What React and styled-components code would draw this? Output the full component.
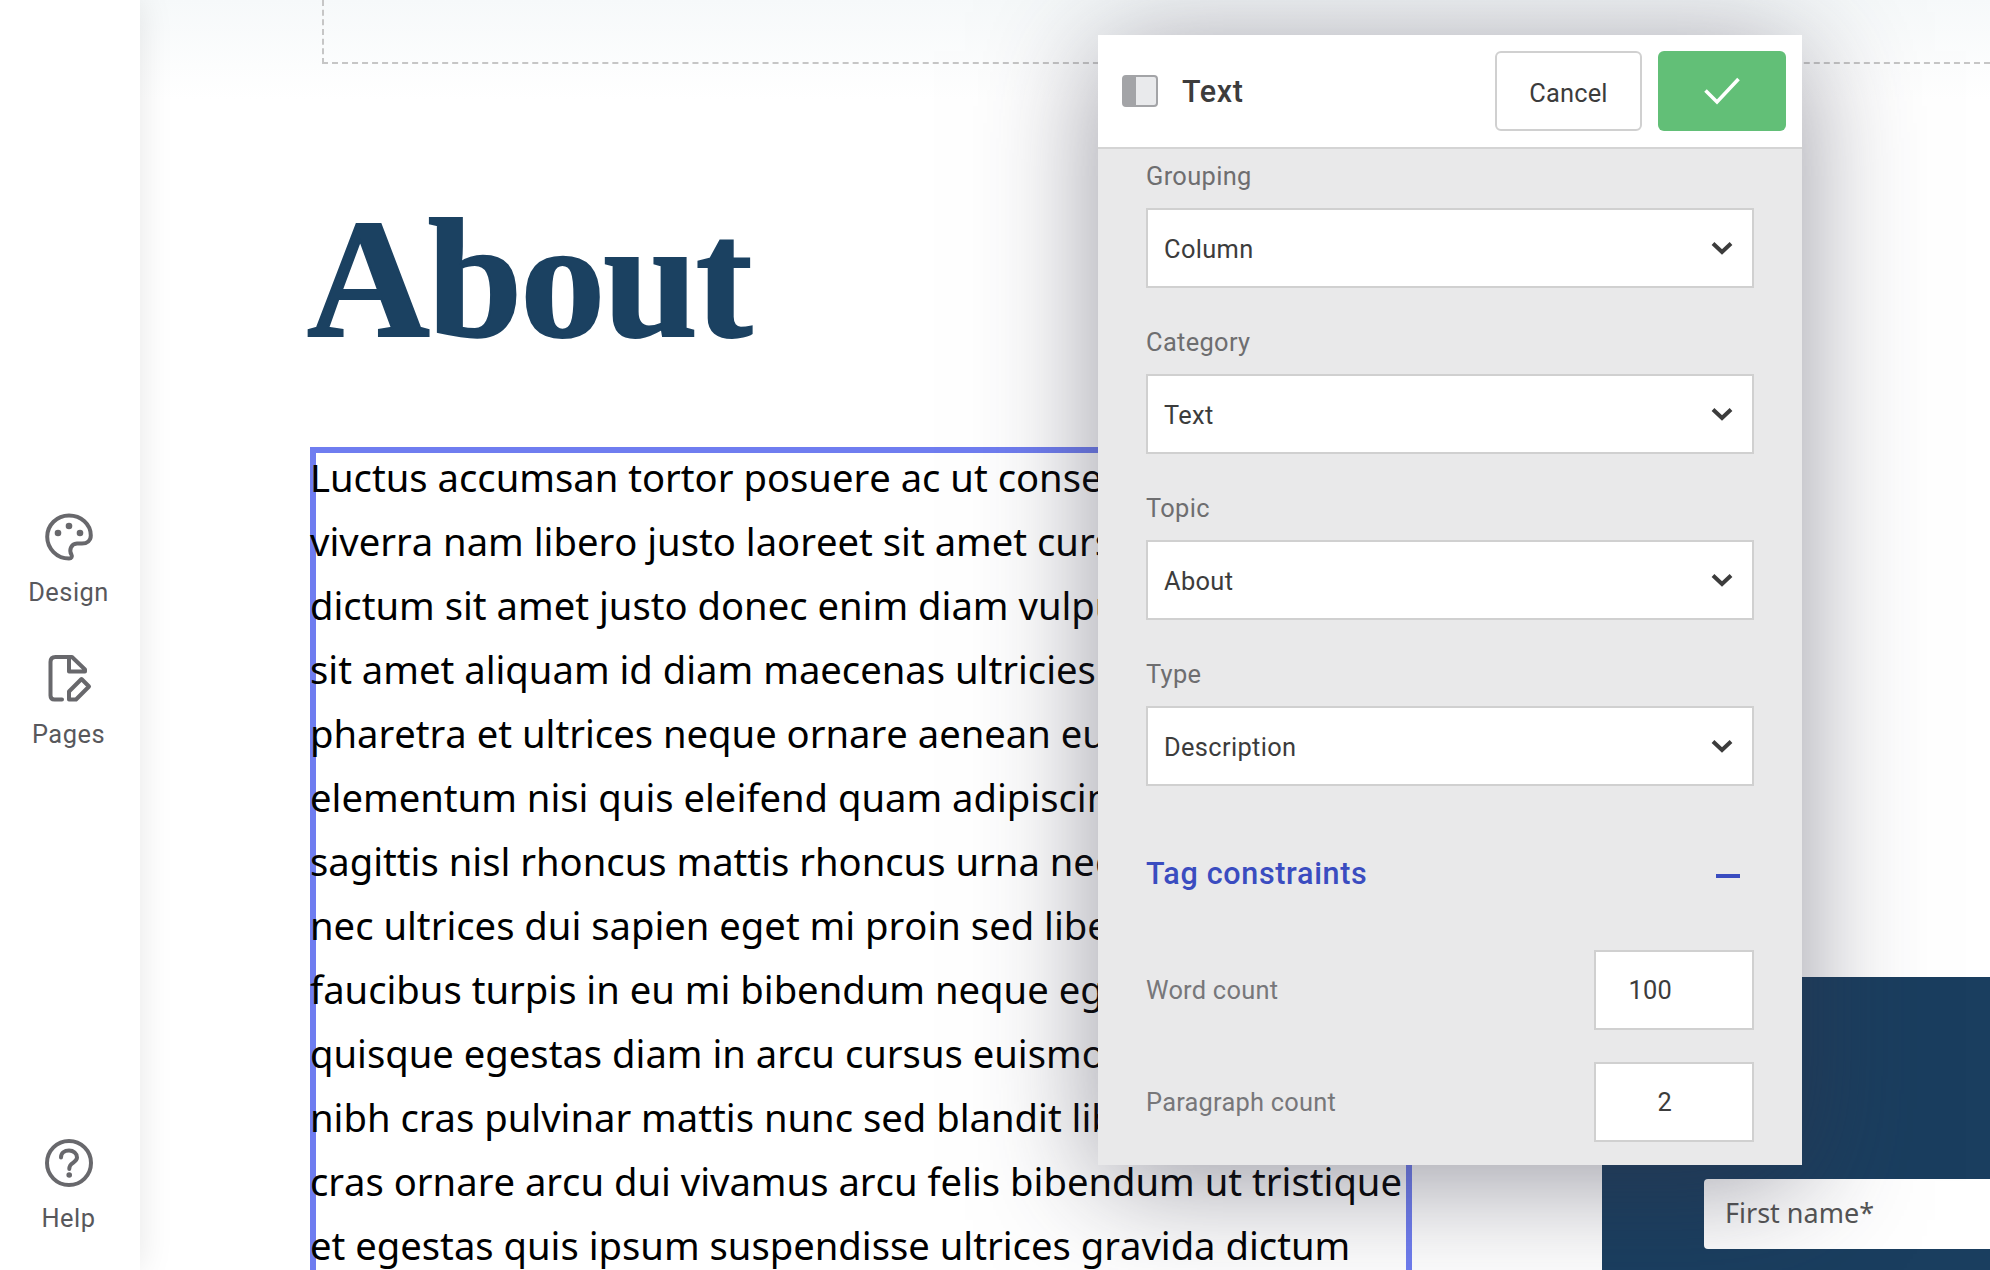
import React from 'react';
import styled, { createGlobalStyle } from 'styled-components';

const GlobalStyle = createGlobalStyle`
  html, body {
    margin: 0;
    padding: 0;
    height: 100%;
    overflow: hidden;
    background: #fff;
    font-family: 'Roboto', 'Liberation Sans', sans-serif;
  }
  * { box-sizing: border-box; }
`;

const bodyLines = [
  'Luctus accumsan tortor posuere ac ut consequat semper',
  'viverra nam libero justo laoreet sit amet cursus sit amet',
  'dictum sit amet justo donec enim diam vulputate ut',
  'sit amet aliquam id diam maecenas ultricies mi eget',
  'pharetra et ultrices neque ornare aenean euismod',
  'elementum nisi quis eleifend quam adipiscing vitae',
  'sagittis nisl rhoncus mattis rhoncus urna neque viverra',
  'nec ultrices dui sapien eget mi proin sed libero enim',
  'faucibus turpis in eu mi bibendum neque egestas congue',
  'quisque egestas diam in arcu cursus euismod quis',
  'nibh cras pulvinar mattis nunc sed blandit libero volutpat',
  'cras ornare arcu dui vivamus arcu felis bibendum ut tristique',
  'et egestas quis ipsum suspendisse ultrices gravida dictum',
];

const fields = [
  { label: 'Grouping', value: 'Column' },
  { label: 'Category', value: 'Text' },
  { label: 'Topic', value: 'About' },
  { label: 'Type', value: 'Description' },
];

const Page = styled.div`
  position: relative;
  display: flex;
  width: 100%;
  height: 100vh;
  overflow: hidden;
`;

/* Sidebar */
const Sidebar = styled.nav`
  position: relative;
  z-index: 1;
  flex: 0 0 140px;
  display: flex;
  flex-direction: column;
  gap: 48px;
  padding: 513px 3px 37px 0;
  background: #fff;
  box-shadow: 0 0 32px rgba(0, 0, 0, 0.1);
`;

const SideItem = styled.a`
  display: flex;
  flex-direction: column;
  align-items: center;
  gap: 16px;
  margin-top: ${(p) => (p.$bottom ? 'auto' : '0')};
  color: #58585c;
  font-size: 25.4px;
  letter-spacing: 0.5px;
  line-height: 30px;
`;

const SideIcon = styled.svg`
  display: block;
  width: 48px;
  height: 48px;
  fill: none;
  stroke: #68686c;
  stroke-width: 4px;
  stroke-linecap: round;
  stroke-linejoin: round;
`;

const Dot = styled.circle`
  fill: #68686c;
  stroke: none;
`;

/* Page canvas */
const Canvas = styled.main`
  flex: 1;
  min-width: 0;
  display: flex;
  flex-direction: column;
  overflow: hidden;
  background: linear-gradient(#f6f9fa, #fff 100px);
`;

const DashedBand = styled.div`
  flex: 0 0 64px;
  margin-left: 182px;
  border-left: 2px dashed #c6c6c6;
  border-bottom: 2px dashed #c6c6c6;
`;

const CanvasRow = styled.div`
  flex: 1;
  min-height: 0;
  display: flex;
`;

const ContentColumn = styled.section`
  flex: 0 0 1462px;
  padding-left: 170px;
`;

const Heading = styled.h1`
  margin: 130px 0 83px -3px;
  color: #1b4161;
  font-family: 'Liberation Serif', serif;
  font-size: 170px;
  font-weight: 700;
  line-height: 170px;
  letter-spacing: -2px;
  -webkit-text-stroke: 2px #1b4161;
`;

const SelectedText = styled.div`
  width: 1102px;
  box-shadow: inset 0 0 0 6px #6f7df0;
`;

const TextLine = styled.div`
  padding-bottom: 4px;
  color: #000;
  font-family: 'Noto Sans', sans-serif;
  font-size: 38.2px;
  font-kerning: none;
  line-height: 60px;
  white-space: nowrap;
`;

const SignupBlock = styled.aside`
  flex: 1;
  align-self: flex-end;
  height: 293px;
  padding: 202px 0 0 102px;
  overflow: hidden;
  background: #1a3e5f;
`;

const SignupInput = styled.div`
  width: 400px;
  height: 70px;
  padding-left: 21px;
  border-radius: 4px;
  background: #fff;
  color: #555;
  font-family: 'Noto Sans', sans-serif;
  font-size: 27px;
  line-height: 68px;
`;

/* Settings panel */
const Panel = styled.div`
  position: absolute;
  z-index: 2;
  top: 35px;
  left: 1098px;
  width: 704px;
  height: 1130px;
  background: #e9e9ea;
  box-shadow: 0 16px 110px rgba(50, 50, 70, 0.5);
`;

const PanelHeader = styled.header`
  display: flex;
  align-items: center;
  height: 114px;
  padding: 0 16px 0 24px;
  border-bottom: 2px solid #d4d4d4;
  background: #fff;
`;

const ToggleIcon = styled.span`
  flex: none;
  width: 36px;
  height: 32px;
  border: 2px solid #a3a4a7;
  border-left-width: 14px;
  border-radius: 4px;
  background: #e9eaec;
`;

const PanelTitle = styled.h2`
  flex: 1;
  margin: 0 0 0 24px;
  color: #3c3c3c;
  font-size: 30.5px;
  font-weight: 500;
  letter-spacing: 0.65px;
`;

const CancelButton = styled.button`
  width: 147px;
  height: 80px;
  margin-right: 16px;
  padding: 3px 0 0;
  border: 2px solid #d0d0d0;
  border-radius: 6px;
  background: #fff;
  color: #3c3c3c;
  font-family: inherit;
  font-size: 25.4px;
  letter-spacing: 0.2px;
`;

const ConfirmButton = styled.button`
  display: flex;
  align-items: center;
  justify-content: center;
  width: 128px;
  height: 80px;
  padding: 0;
  border: 0;
  border-radius: 6px;
  background: #62bf77;
`;

const PanelBody = styled.div`
  padding: 12px 48px 0;
`;

const FieldList = styled.div`
  display: flex;
  flex-direction: column;
  gap: 39px;
`;

const FieldLabel = styled.div`
  margin-bottom: 17px;
  color: #6e6e70;
  font-size: 25.4px;
  letter-spacing: 0.35px;
  line-height: 30px;
`;

const SelectBox = styled.div`
  display: flex;
  align-items: center;
  justify-content: space-between;
  height: 80px;
  padding: 2px 19px 0 16px;
  border: 2px solid #d0d0d0;
  background: #fff;
  color: #3c3c3c;
  font-size: 25.4px;
  letter-spacing: 0.35px;
`;

const ChevronIcon = styled.svg`
  width: 22px;
  height: 14px;
  margin-top: -3px;
  fill: none;
  stroke: #3c3c3c;
  stroke-width: 4px;
`;

const SectionHeader = styled.div`
  display: flex;
  align-items: center;
  justify-content: space-between;
  margin: 69.5px 0 58px;
  padding-right: 14px;
  color: #3a4cc0;
  font-size: 30.5px;
  font-weight: 500;
  letter-spacing: 0.68px;
  line-height: 36px;
`;

const MinusBar = styled.span`
  width: 24px;
  height: 4px;
  margin-top: 5px;
  background: #3a4cc0;
`;

const CountRows = styled.div`
  display: flex;
  flex-direction: column;
  gap: 32px;
`;

const CountRow = styled.div`
  display: flex;
  align-items: center;
  justify-content: space-between;
  color: #77777a;
  font-size: 25.4px;
  letter-spacing: 0.25px;
`;

const CountValue = styled.div`
  width: 160px;
  height: 80px;
  padding-right: 80px;
  border: 2px solid #d0d0d0;
  background: #fff;
  color: #3c3c3c;
  text-align: right;
  line-height: 76px;
`;

const Chevron = () => (
  <ChevronIcon viewBox="0 0 22 14">
    <path d="M2 2.5 L11 11 L20 2.5" />
  </ChevronIcon>
);

export default function App() {
  return (
    <>
      <GlobalStyle />
      <Page>
        <Sidebar>
          <SideItem>
            <SideIcon viewBox="0 0 48 48">
              <path d="M24 2.5C11.8 2.5 2.2 12 2.2 23.8C2.2 35.5 11.8 45.5 24 45.5C26.5 45.5 27.5 43.5 26.4 41.5C24 37.5 25.5 31 32 30.5L37 30.5C42 30.5 45.8 27.5 45.8 22.5C45.8 11 36 2.5 24 2.5Z" />
              <Dot cx="13" cy="20" r="3.3" />
              <Dot cx="24" cy="13" r="3.3" />
              <Dot cx="35" cy="20" r="3.3" />
            </SideIcon>
            Design
          </SideItem>
          <SideItem>
            <SideIcon viewBox="0 0 48 48">
              <path d="M17 44.5H9.5Q5.5 44.5 5.5 40.5V7Q5.5 2 10.5 2H24.5" />
              <path d="M24 2H27L40 14.5V16.5H24Z" />
              <path d="M24 44.5V36.5L36.5 24L44 31.5L31 44.5Z" />
            </SideIcon>
            Pages
          </SideItem>
          <SideItem $bottom>
            <SideIcon viewBox="0 0 48 48">
              <circle cx="24" cy="24" r="22" />
              <path d="M16 18.5C16 14 19.5 11.5 24 11.5C28.5 11.5 32 14.5 32 18.5C32 22.5 27 23.5 25.2 26.5C24.5 27.7 24.3 28.5 24.3 30" />
              <Dot cx="24.2" cy="36" r="2.8" />
            </SideIcon>
            Help
          </SideItem>
        </Sidebar>

        <Canvas>
          <DashedBand />
          <CanvasRow>
            <ContentColumn>
              <Heading>About</Heading>
              <SelectedText>
                {bodyLines.map((line) => (
                  <TextLine key={line}>{line}</TextLine>
                ))}
              </SelectedText>
            </ContentColumn>
            <SignupBlock>
              <SignupInput>First name*</SignupInput>
            </SignupBlock>
          </CanvasRow>
        </Canvas>

        <Panel>
          <PanelHeader>
            <ToggleIcon />
            <PanelTitle>Text</PanelTitle>
            <CancelButton>Cancel</CancelButton>
            <ConfirmButton>
              <svg width="36" height="28" viewBox="0 0 36 28" fill="none" stroke="#fff" strokeWidth="3.6">
                <path d="M1.5 13.5 L13 25 L34.5 2" />
              </svg>
            </ConfirmButton>
          </PanelHeader>
          <PanelBody>
            <FieldList>
              {fields.map((field) => (
                <div key={field.label}>
                  <FieldLabel>{field.label}</FieldLabel>
                  <SelectBox>
                    {field.value}
                    <Chevron />
                  </SelectBox>
                </div>
              ))}
            </FieldList>
            <SectionHeader>
              Tag constraints
              <MinusBar />
            </SectionHeader>
            <CountRows>
              <CountRow>
                Word count
                <CountValue>100</CountValue>
              </CountRow>
              <CountRow>
                Paragraph count
                <CountValue>2</CountValue>
              </CountRow>
            </CountRows>
          </PanelBody>
        </Panel>
      </Page>
    </>
  );
}
